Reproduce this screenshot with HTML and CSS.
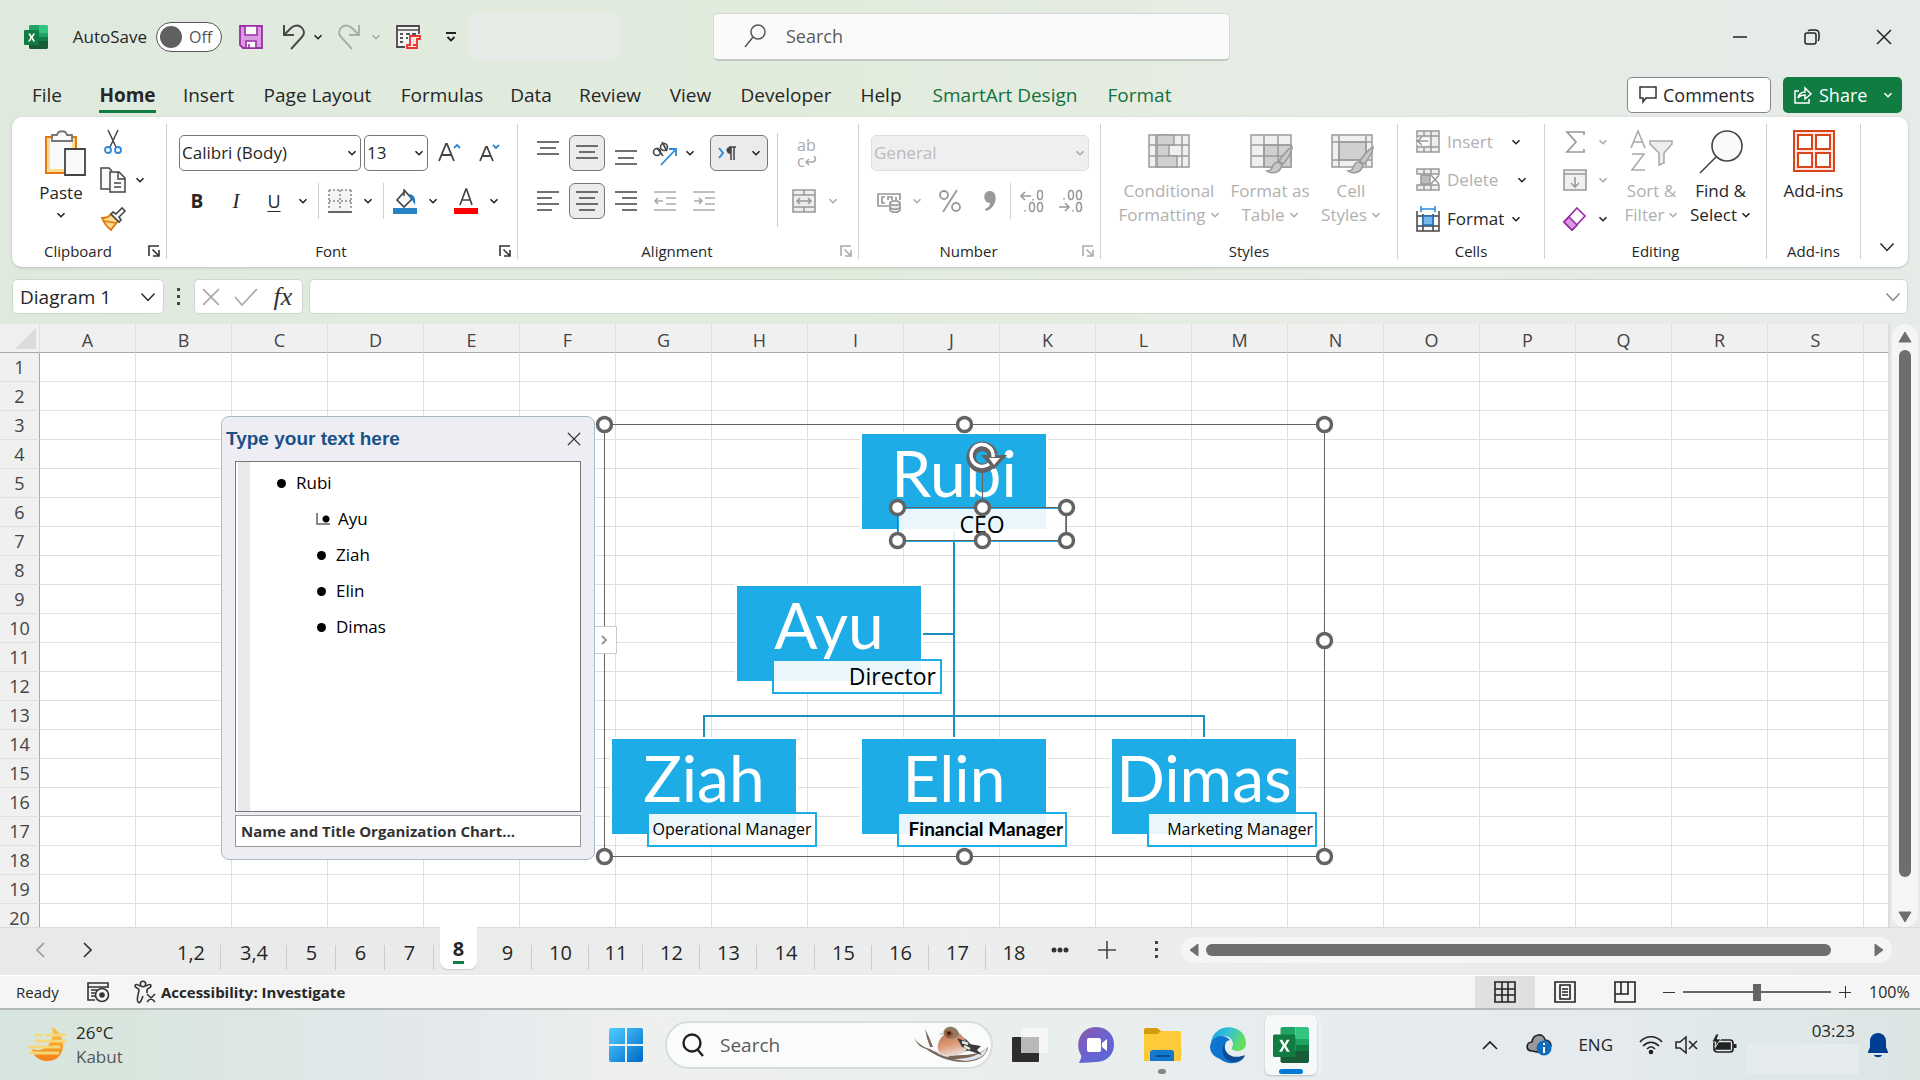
FILE: index.html
```html
<!DOCTYPE html>
<html lang="en">
<head>
<meta charset="utf-8">
<title>Diagram 1 - Excel</title>
<link rel="stylesheet" href="styles.css">
</head>
<body>
<svg class="defs" aria-hidden="true">
  <symbol id="chev" viewBox="0 0 10 10"><path d="M1.5 3.2L5 6.7 8.5 3.2" fill="none" stroke="currentColor" stroke-width="1.6"/></symbol>
  <symbol id="chev-big" viewBox="0 0 16 16"><path d="M1.5 4.5L8 11.500 14.500 4.500" fill="none" stroke="currentColor" stroke-width="1.5"/></symbol>
  <symbol id="launch" viewBox="0 0 12 12"><path d="M1 11V1h10M4.500 4.500L10 10M11 5v6H5" fill="none" stroke="currentColor" stroke-width="1.6"/></symbol>
  <symbol id="cross" viewBox="0 0 16 16"><path d="M1 1l14 14M15 1L1 15" fill="none" stroke="currentColor" stroke-width="1.5"/></symbol>
  <symbol id="excel" viewBox="0 0 24 24">
    <path d="M6 0h9v8H5V1z" fill="#21a366"/><path d="M15 0h8l1 1v7h-9z" fill="#33c481"/><path d="M5 8h10v8H5z" fill="#107c41"/><path d="M15 8h9v8h-9z" fill="#107c41"/><path d="M15 8h9v4h-9z" fill="#21a366"/><path d="M5 16h19v7l-1 1H6l-1-1z" fill="#185c37"/>
    <rect x="0" y="5" width="15" height="15" rx="1" fill="#107c41"/><path d="M4.200 8.500h2l1.500 2.800L9.200 8.500h1.900l-2.400 4 2.500 4H9.200l-1.600-3-1.600 3H4l2.500-4z" fill="#fff"/>
  </symbol>
  <symbol id="brush" viewBox="0 0 30 30"><path d="M28 3c-4 2-10 9-13 14l4 3c4-4 9-12 9-17zM14 18c-4 0-5 3-6 6-1 2-3 3-5 3 4 3 13 3 15-6z" fill="#c8c8c8" stroke="#9a9a9a" stroke-width="1.500"/></symbol>
</svg>

<header class="titlebar">
  <div class="quick">
    <svg width="24" height="24"><use href="#excel"/></svg>
    <label class="autosave" for="autosave">AutoSave</label>
    <button class="toggle" id="autosave" type="button"><i></i>Off</button>
    <button class="tool" type="button" aria-label="Save"><svg width="24" height="24" viewBox="0 0 24 24"><path d="M1 1h22v22H4l-3-3z" fill="#d89be0" stroke="#9a2fa6" stroke-width="1.800"/><path d="M6 1h12v9H6zM7 16h10v7H7z" fill="#fafafa" stroke="#9a2fa6" stroke-width="1.600"/><path d="M10 19v4" stroke="#9a2fa6" stroke-width="1.600"/></svg></button>
    <button class="tool" type="button" aria-label="Undo"><svg width="24" height="26" viewBox="0 0 24 26" fill="none" stroke="#4a4a4a" stroke-width="2"><path d="M2 1v10h10M2 11L9 4c8-7 17 3 11 9L9 25"/></svg></button>
    <svg class="chev"><use href="#chev"/></svg>
    <button class="tool" type="button" aria-label="Redo"><svg width="24" height="26" viewBox="0 0 24 26" fill="none" stroke="#a9b0a9" stroke-width="2"><path d="M22 1v10H12M22 11L15 4C7-3-2 7 4 13l11 12"/></svg></button>
    <svg class="chev off"><use href="#chev"/></svg>
    <button class="tool" type="button" aria-label="Script"><svg width="26" height="26" viewBox="0 0 26 26" fill="none"><path d="M10 23H2V2h22v8" stroke="#4a4a4a" stroke-width="1.800" fill="#f5f5f5"/><path d="M2 6h22" stroke="#4a4a4a" stroke-width="1.500"/><path d="M5 10h3M11 10h4M17 10h4M5 14h3M11 14h2M5 18h3" stroke="#555" stroke-width="1.800"/><path d="M15 12h10v3h-3v9H12v-3h3zM18 21h4" stroke="#e8352e" stroke-width="1.800" fill="#fbe4e2"/></svg></button>
    <button class="tool" type="button" aria-label="Customize"><svg width="12" height="12" viewBox="0 0 12 12" fill="none" stroke="#222" stroke-width="1.800"><path d="M1 2h10M2.500 6L6 9.500 9.500 6"/></svg></button>
    <span class="docname"></span>
  </div>
  <label class="search"><svg width="22" height="24" viewBox="0 0 22 24" fill="none" stroke="#555" stroke-width="1.500"><circle cx="14" cy="8" r="7"/><path d="M9 13L1 23"/></svg><input type="text" placeholder="Search" aria-label="Search"></label>
  <div class="window">
    <button type="button" aria-label="Minimize"><svg width="16" height="16"><path d="M1 8h14" stroke="#222" stroke-width="1.500"/></svg></button>
    <button type="button" aria-label="Restore"><svg width="16" height="16" fill="none" stroke="#222" stroke-width="1.500"><rect x="1" y="4" width="11" height="11" rx="2"/><path d="M4 2c1-1 1-1 3-1h4c3 0 4 1 4 4v4c0 2 0 2-1 3"/></svg></button>
    <button type="button" aria-label="Close"><svg width="16" height="16"><use href="#cross"/></svg></button>
  </div>
</header>

<div class="menubar">
  <nav class="menus">
    <a href="#">File</a><a href="#" class="current">Home</a><a href="#">Insert</a><a href="#">Page Layout</a><a href="#">Formulas</a><a href="#">Data</a><a href="#">Review</a><a href="#">View</a><a href="#">Developer</a><a href="#">Help</a><a href="#" class="ctx">SmartArt Design</a><a href="#" class="ctx">Format</a>
  </nav>
  <button class="comments" type="button"><svg width="18" height="18" viewBox="0 0 18 18" fill="none" stroke="#333" stroke-width="1.500"><path d="M1 1h16v11H7l-3 4v-4H1z"/></svg>Comments</button>
  <button class="share" type="button"><svg width="18" height="18" viewBox="0 0 18 18" fill="none" stroke="#fff" stroke-width="1.500"><path d="M5 5H1v12h14v-4M4 12c1-5 4-6 7-6V2l6 6-6 5V9c-3 0-5 0-7 3z"/></svg>Share<svg class="chev"><use href="#chev"/></svg></button>
</div>

<section class="ribbon">
  <div class="group clipboard">
    <div class="body">
      <button class="big" type="button">
        <svg width="50" height="46" viewBox="-8 0 50 46"><path d="M2 7h30v36H2z" fill="#f9dc91" stroke="#e07a10" stroke-width="2"/><path d="M6 9h22v30H6z" fill="#fafafa"/><path d="M8 11V5h5c1-5 9-5 10 0h5v6z" fill="#fafafa" stroke="#777" stroke-width="1.800"/><path d="M21 19h20v26H21z" fill="#fafafa" stroke="#444" stroke-width="1.800"/></svg>
        <span>Paste</span><svg class="chev"><use href="#chev"/></svg>
      </button>
      <div class="stack">
        <button class="tool" type="button" aria-label="Cut"><svg width="18" height="26" viewBox="0 0 18 26" fill="none"><path d="M4 1l8 17M14 1L6 18" stroke="#444" stroke-width="1.500"/><circle cx="4" cy="21" r="3" stroke="#2b88d8" stroke-width="1.800"/><circle cx="14" cy="21" r="3" stroke="#2b88d8" stroke-width="1.800"/></svg></button><i></i>
        <button class="tool" type="button" aria-label="Copy"><svg width="26" height="26" viewBox="0 0 26 26" fill="#fafafa" stroke="#444" stroke-width="1.500"><path d="M9 22H1V1h8l3 3"/><path d="M10 5h9l6 6v14H10zM18 5v7h7M14 16h7M14 20h7"/></svg></button><svg class="chev"><use href="#chev"/></svg>
        <button class="tool" type="button" aria-label="Format Painter"><svg width="26" height="24" viewBox="0 0 26 24"><path d="M2 11c4 0 7-1 9-4l7 7c-3 4-5 6-7 9-4-3-7-7-9-12z" fill="#fbdb92" stroke="#e07a10" stroke-width="1.800"/><path d="M4 14l12 2" stroke="#e07a10" stroke-width="1.500"/><path d="M11 7l2-2 3 2 6-6 3 3-6 6 2 3-2 2z" fill="#fafafa" stroke="#444" stroke-width="1.600"/></svg></button>
      </div>
    </div>
    <div class="caption"><span>Clipboard</span><svg><use href="#launch"/></svg></div>
  </div>

  <div class="group font">
    <div class="body rows">
      <div class="line fonts">
        <label class="pick"><select aria-label="Font"><option>Calibri (Body)</option></select><svg class="chev"><use href="#chev"/></svg></label>
        <label class="pick"><select aria-label="Font size"><option>13</option></select><svg class="chev"><use href="#chev"/></svg></label>
        <button class="tool" type="button" aria-label="Grow font"><svg width="24" height="24" viewBox="0 0 24 24" fill="none" stroke="#444" stroke-width="1.800"><path d="M1 20L8 3h1l7 17M4 14h9"/><path d="M16 7l3-3 3 3" stroke="#2b88d8"/></svg></button>
        <button class="tool" type="button" aria-label="Shrink font"><svg width="22" height="24" viewBox="0 0 22 24" fill="none" stroke="#444" stroke-width="1.800"><path d="M2 20L8 6h1l6 14M4 15h9"/><path d="M15 4l3 3 3-3" stroke="#2b88d8"/></svg></button>
      </div>
      <div class="line marks">
        <button class="tool b" type="button">B</button><button class="tool it" type="button">I</button><button class="tool u" type="button">U</button><svg class="chev"><use href="#chev"/></svg>
        <i class="bar"></i>
        <button class="tool" type="button" aria-label="Borders"><svg width="24" height="24" viewBox="0 0 24 24" fill="none" stroke="#888" stroke-width="1.500"><path d="M1 1h22v22H1z" fill="#f4f4f4" stroke="none"/><path d="M1 1h22M1 1v20M23 1v20M12 1v20M1 12h22" stroke-dasharray="2 2"/><path d="M0 23h24" stroke-width="2" stroke="#666"/></svg></button><svg class="chev"><use href="#chev"/></svg>
        <i class="bar"></i>
        <button class="tool" type="button" aria-label="Fill colour"><svg width="24" height="26" viewBox="0 0 24 26"><path d="M4 12l8-9 7 8-8 8z" fill="#fafafa" stroke="#444" stroke-width="1.700"/><path d="M11 1v7" stroke="#444" stroke-width="1.500"/><path d="M15 6c6 0 8 4 7 11l-3-5z" fill="#1f7ac0"/><path d="M0 20h24v6H0z" fill="#2583c6"/></svg></button><svg class="chev"><use href="#chev"/></svg>
        <button class="tool" type="button" aria-label="Font colour"><svg width="24" height="26" viewBox="0 0 24 26"><path d="M6 17L12 1h.5L18 17M8 12h8" fill="none" stroke="#444" stroke-width="1.700"/><path d="M0 20h24v6H0z" fill="#f00"/></svg></button><svg class="chev"><use href="#chev"/></svg>
      </div>
    </div>
    <div class="caption"><span>Font</span><svg><use href="#launch"/></svg></div>
  </div>

  <div class="group align">
    <div class="body">
      <div class="rows">
        <div class="line aligns">
          <button class="tool" type="button" aria-label="Top"><svg width="22" height="18" viewBox="0 0 22 18" stroke="#444" stroke-width="1.700"><path d="M0-2h22M3 4h16M0 10h22"/></svg></button>
          <button class="tool on" type="button" aria-label="Middle"><svg width="22" height="18" viewBox="0 0 22 18" stroke="#444" stroke-width="1.700"><path d="M0 2h22M3 8h16M0 14h22"/></svg></button>
          <button class="tool" type="button" aria-label="Bottom"><svg width="22" height="18" viewBox="0 0 22 18" stroke="#444" stroke-width="1.700"><path d="M0 7h22M3 14h16M0 20h22"/></svg></button>
          <button class="tool" type="button" aria-label="Orientation"><svg width="26" height="26" viewBox="0 0 26 26" fill="none"><g stroke="#444" stroke-width="1.600"><circle cx="5" cy="12" r="3.500"/><path d="M5 8l6 8M10 2l5 9"/><circle cx="12" cy="7" r="3.500"/></g><path d="M9 25L24 9M17 9h7v7" stroke="#2b88d8" stroke-width="1.800"/></svg></button>
          <svg class="chev"><use href="#chev"/></svg><i></i>
          <button class="tool on" type="button" aria-label="Text direction"><svg width="20" height="16" viewBox="0 0 20 16" fill="none"><path d="M2 3l4 5-4 5" stroke="#2b88d8" stroke-width="2"/><path d="M19 2h-7M14 2v13M17 2v13" stroke="#444" stroke-width="1.500"/><path d="M14 2c-6-1-6 7 0 7z" fill="#444"/></svg><svg class="chev"><use href="#chev"/></svg></button>
        </div>
        <div class="line aligns">
          <button class="tool" type="button" aria-label="Left"><svg width="22" height="22" viewBox="0 0 22 22" stroke="#444" stroke-width="1.700"><path d="M0 2h22M0 8h15M0 14h22M0 20h15"/></svg></button>
          <button class="tool on" type="button" aria-label="Center"><svg width="22" height="22" viewBox="0 0 22 22" stroke="#444" stroke-width="1.700"><path d="M0 2h22M3 8h16M0 14h22M3 20h16"/></svg></button>
          <button class="tool" type="button" aria-label="Right"><svg width="22" height="22" viewBox="0 0 22 22" stroke="#444" stroke-width="1.700"><path d="M0 2h22M7 8h15M0 14h22M7 20h15"/></svg></button>
          <button class="tool" type="button" aria-label="Decrease indent"><svg width="22" height="22" viewBox="0 0 22 22" fill="none" stroke="#aaa" stroke-width="1.700"><path d="M0 2h22M12 8h10M12 14h10M0 20h22M9 11H1M4 8l-3 3 3 3"/></svg></button>
          <span class="indent"><button class="tool" type="button" aria-label="Increase indent"><svg width="22" height="22" viewBox="0 0 22 22" fill="none" stroke="#aaa" stroke-width="1.700"><path d="M0 2h22M12 8h10M12 14h10M0 20h22M1 11h8M6 8l3 3-3 3"/></svg></button></span>
        </div>
      </div>
      <i class="tall"></i>
      <div class="rows wraps">
        <button class="tool wrap" type="button" aria-label="Wrap text"><span>ab</span><span>c<svg width="12" height="12" viewBox="0 0 12 12" fill="none" stroke="#aaa" stroke-width="1.600"><path d="M9 1c3 3 1 6-2 6H1M4 4L1 7l3 3"/></svg></span></button>
        <div class="line merge"><button class="tool" type="button" aria-label="Merge"><svg width="24" height="24" viewBox="0 0 24 24" fill="#eee" stroke="#999" stroke-width="1.600"><path d="M1 1h22v22H1zM1 6h22M1 18h22M12 1v5M12 18v5M5 12h14M8 9l-3 3 3 3M16 9l3 3-3 3"/></svg></button><svg class="chev off"><use href="#chev"/></svg></div>
      </div>
    </div>
    <div class="caption off"><span>Alignment</span><svg><use href="#launch"/></svg></div>
  </div>

  <div class="group number">
    <div class="body rows">
      <label class="pick"><select aria-label="Number format" disabled><option>General</option></select><svg class="chev off"><use href="#chev"/></svg></label>
      <div class="line numbers">
        <button class="tool" type="button" aria-label="Accounting"><svg width="24" height="24" viewBox="0 0 24 24" fill="none" stroke="#999" stroke-width="1.700"><path d="M12 17H1V5h22v6M5 8v6M8 8H5v6h3M11 11V8h4v3M19 8v3"/><path d="M13 14v7c1 3 9 3 10 0v-7M13 14c1-3 9-3 10 0-1 3-9 3-10 0M13 18c1 3 9 3 10 0" fill="#eee"/></svg></button><svg class="chev off"><use href="#chev"/></svg>
        <button class="tool" type="button" aria-label="Percent"><svg width="22" height="24" viewBox="0 0 22 24" fill="none" stroke="#999" stroke-width="1.800"><circle cx="5" cy="6" r="4"/><circle cx="17" cy="18" r="4"/><path d="M18 1L4 23"/></svg></button>
        <button class="tool" type="button" aria-label="Comma"><svg width="12" height="22" viewBox="0 0 12 22"><path d="M6 1c7 0 7 10 3 15-2 3-4 4-7 5l-1-2c3-1 5-3 5-6-7 0-8-12 0-12z" fill="#999"/></svg></button>
        <i class="bar"></i>
        <button class="tool dec" type="button" aria-label="Increase decimal"><svg width="24" height="24" viewBox="0 0 24 24" fill="none" stroke="#999" stroke-width="1.600"><path d="M11 7H1M5 3L1 7l4 4M13 10v1.500M5 21v1.500"/><ellipse cx="20" cy="6" rx="2.500" ry="4.500"/><ellipse cx="12" cy="18" rx="2.500" ry="4.500"/><ellipse cx="20" cy="18" rx="2.500" ry="4.500"/></svg></button>
        <button class="tool dec" type="button" aria-label="Decrease decimal"><svg width="24" height="24" viewBox="0 0 24 24" fill="none" stroke="#999" stroke-width="1.600"><path d="M0 18h10M6 14l4 4-4 4M14 21v1.500M5 9v1.500"/><ellipse cx="12" cy="6" rx="2.500" ry="4.500"/><ellipse cx="20" cy="6" rx="2.500" ry="4.500"/><ellipse cx="20" cy="18" rx="2.500" ry="4.500"/></svg></button>
      </div>
    </div>
    <div class="caption off"><span>Number</span><svg><use href="#launch"/></svg></div>
  </div>

  <div class="group styles">
    <div class="body">
      <button class="big off" type="button"><svg width="42" height="42" viewBox="0 0 42 42" fill="#f0f0f0" stroke="#9a9a9a" stroke-width="1.500"><path d="M1 5h40v32H1zM8 5v32M34 5v32M1 15h40M1 26h40"/><path d="M9 5h17v10H9zM9 15h12v11H9zM9 26h20v11H9z" fill="#d0d0d0"/></svg><span>Conditional</span><span>Formatting <svg class="chev"><use href="#chev"/></svg></span></button>
      <button class="big off" type="button"><svg width="52" height="42" viewBox="-6 0 52 42" fill="#f0f0f0" stroke="#9a9a9a" stroke-width="1.500"><path d="M1 5h40v32H1z"/><path d="M14 15h27v22H14z" fill="#d0d0d0"/><path d="M14 5v32M28 5v32M1 15h40M1 26h40" fill="none"/><use href="#brush" x="14" y="14" width="30" height="30"/></svg><span>Format as</span><span>Table <svg class="chev"><use href="#chev"/></svg></span></button>
      <button class="big off" type="button"><svg width="52" height="42" viewBox="-6 0 52 42" fill="#f0f0f0" stroke="#9a9a9a" stroke-width="1.500"><path d="M1 5h40v32H1z"/><path d="M8 12h27v18H8z" fill="#d0d0d0"/><path d="M8 5v32M35 5v32M1 12h40M1 30h40" fill="none"/><use href="#brush" x="14" y="14" width="30" height="30"/></svg><span>Cell</span><span>Styles <svg class="chev"><use href="#chev"/></svg></span></button>
    </div>
    <div class="caption"><span>Styles</span></div>
  </div>

  <div class="group cells">
    <div class="body list">
      <button class="item off" type="button"><svg width="24" height="24" viewBox="0 0 24 24" fill="#eee" stroke="#999" stroke-width="1.500"><path d="M1 1h22v21H1zM1 6h22M1 17h22M8 1v5M15 1v21M8 17v5"/><path d="M12 8H1v7h11z" fill="#fff" stroke="none"/><path d="M12 11H1M6 7l-5 4 5 4"/></svg><span>Insert</span><svg class="chev"><use href="#chev"/></svg></button>
      <button class="item off wide" type="button"><svg width="24" height="24" viewBox="0 0 24 24" fill="#eee" stroke="#999" stroke-width="1.500"><path d="M1 1h22v5H1zM1 17h22v5H1zM8 1v5M15 1v5M8 17v5M15 17v5"/><path d="M5 7h9v9H5z" fill="#bbb"/><path d="M15 7l8 9M23 7l-8 9"/></svg><span>Delete</span><svg class="chev"><use href="#chev"/></svg></button>
      <button class="item" type="button"><svg width="24" height="26" viewBox="0 0 24 26" fill="#fafafa" stroke="#444" stroke-width="1.500"><path d="M1 5v20h22V5M1 10h22M1 20h22M7 8v17M17 8v17"/><path d="M7 10h10v9H7z" fill="#7ab8ee" stroke="#1b6fc0"/><path d="M5 3h14M5 0v6M19 0v6" stroke="#2b88d8"/></svg><span>Format</span><svg class="chev"><use href="#chev"/></svg></button>
    </div>
    <div class="caption"><span>Cells</span></div>
  </div>

  <div class="group editing">
    <div class="body">
      <div class="stack">
        <button class="tool" type="button" aria-label="Sum"><svg width="20" height="24" viewBox="0 0 20 24" fill="none" stroke="#999" stroke-width="1.700"><path d="M19 5V2H2l9 10-9 10h17v-3"/></svg></button><svg class="chev off"><use href="#chev"/></svg>
        <button class="tool" type="button" aria-label="Fill"><svg width="24" height="24" viewBox="0 0 24 24" fill="#f0f0f0" stroke="#999" stroke-width="1.600"><path d="M1 2h22v20H1zM1 6h22M12 9v10M8 15l4 4 4-4"/></svg></button><svg class="chev off"><use href="#chev"/></svg>
        <button class="tool" type="button" aria-label="Clear"><svg width="24" height="24" viewBox="0 0 24 24" stroke="#9a2fa6" stroke-width="1.700" fill="#fff"><path d="M14 1l8 8L9 23l-8-8z"/><path d="M6 10l8 8-5 5-8-8z" fill="#d89be0"/></svg></button><svg class="chev"><use href="#chev"/></svg>
      </div>
      <button class="big off" type="button"><svg width="44" height="42" viewBox="0 0 44 42" fill="none" stroke="#aaa" stroke-width="1.600"><path d="M1 18L8 1l7 17M3 12h10M2 24h12L2 40h13"/><path d="M20 11h22v3l-8 9v10l-5 2V23l-9-9z" fill="#eee"/></svg><span>Sort &amp;</span><span>Filter <svg class="chev"><use href="#chev"/></svg></span></button>
      <button class="big" type="button"><svg width="44" height="42" viewBox="0 0 44 42" fill="#fafafa" stroke="#444" stroke-width="1.600"><circle cx="28" cy="16" r="15"/><path d="M17 27L1 43"/></svg><span>Find &amp;</span><span>Select <svg class="chev"><use href="#chev"/></svg></span></button>
    </div>
    <div class="caption"><span>Editing</span></div>
  </div>

  <div class="group addins">
    <div class="body">
      <button class="big" type="button"><svg width="42" height="42" viewBox="0 0 42 42" fill="#fff" stroke="#d9441a" stroke-width="2"><path d="M1 1h40v40H1z" fill="#fde6df"/><path d="M5 5h14v14H5zM23 5h14v14H23zM5 23h14v14H5zM23 23h14v14H23z"/></svg><span>Add-ins</span></button>
    </div>
    <div class="caption"><span>Add-ins</span></div>
  </div>
  <button class="collapse" type="button" aria-label="Collapse ribbon"><svg width="16" height="16"><use href="#chev-big"/></svg></button>
</section>

<section class="formula">
  <label class="name"><input type="text" value="Diagram 1" aria-label="Name box"><svg width="16" height="16"><use href="#chev-big"/></svg></label>
  <svg class="dots" width="4" height="18" fill="#444"><path d="M0 0h3v3H0zM0 7h3v3H0zM0 14h3v3H0z"/></svg>
  <div class="entry">
    <button class="tool" type="button" aria-label="Cancel"><svg width="18" height="18" viewBox="0 0 16 16" color="#aaa"><use href="#cross"/></svg></button>
    <button class="tool" type="button" aria-label="Enter"><svg width="24" height="18" viewBox="0 0 24 18" fill="none" stroke="#aaa" stroke-width="1.700"><path d="M1 9l7 8L23 1"/></svg></button>
    <button class="tool fx" type="button" aria-label="Insert function">fx</button>
  </div>
  <label class="expr"><input type="text" aria-label="Formula bar"><svg width="16" height="16"><use href="#chev-big"/></svg></label>
</section>

<main class="work">
  <div class="sheet">
    <table class="grid"><thead></thead><tbody></tbody></table>

    <div class="diagram">
      <svg class="links" width="724" height="436" fill="none" stroke="#1c8fc0" stroke-width="2"><path d="M350 106v208M319 210h31M100 314v-22h500v22"/></svg>
      <div class="person p1">Rubi</div><div class="role r1">CEO</div>
      <div class="person p2">Ayu</div><div class="role r2">Director</div>
      <div class="person p3">Ziah</div><div class="role r3">Operational Manager</div>
      <div class="person p4">Elin</div><div class="role r4">Financial Manager</div>
      <div class="person p5">Dimas</div><div class="role r5">Marketing Manager</div>
      <svg class="frame" width="740" height="450" viewBox="-10 -10 740 450" fill="none" stroke="#636363">
        <path d="M.5.500h720v432H.5zM293.500 83.500h169v33h-169zM378.500 83V47"/>
        <g fill="#fff" stroke-width="3.500"><circle cx=".5" cy=".5" r="7"/><circle cx="360.500" cy=".5" r="7"/><circle cx="720.500" cy=".5" r="7"/><circle cx="720.500" cy="216.500" r="7"/><circle cx=".5" cy="432.500" r="7"/><circle cx="360.500" cy="432.500" r="7"/><circle cx="720.500" cy="432.500" r="7"/><circle cx="293.500" cy="83.500" r="7"/><circle cx="378.500" cy="83.500" r="7"/><circle cx="462.500" cy="83.500" r="7"/><circle cx="293.500" cy="116.500" r="7"/><circle cx="378.500" cy="116.500" r="7"/><circle cx="462.500" cy="116.500" r="7"/></g>
        <path d="M386 41A11 11 0 1 1 389 31" stroke-width="9.500"/><path d="M379 32h22l-11 12z" fill="#636363" stroke-width="2"/><path d="M385 40A11 11 0 1 1 389 33" stroke="#fff" stroke-width="3.500"/><path d="M385 34h11l-6 7z" fill="#fff" stroke="none"/>
      </svg>
      <button class="slide" type="button" aria-label="Text pane"><svg width="8" height="10" fill="none" stroke="#999" stroke-width="2"><path d="M2 1l4 4-4 4"/></svg></button>
    </div>

    <aside class="pane">
      <div class="panehead"><h2>Type your text here</h2><button class="tool" type="button" aria-label="Close pane"><svg width="14" height="14" viewBox="0 0 16 16"><use href="#cross"/></svg></button></div>
      <ul class="outline">
        <li>Rubi</li><li class="sub assistant">Ayu</li><li class="sub">Ziah</li><li class="sub">Elin</li><li class="sub">Dimas</li>
      </ul>
      <p class="panefoot">Name and Title Organization Chart...</p>
    </aside>
  </div>
  <div class="vscroll">
    <svg width="14" height="12" fill="#6e6e6e"><path d="M7 1l6 10H1z" stroke="#6e6e6e" stroke-linejoin="round"/></svg><i></i><svg width="14" height="12" fill="#6e6e6e"><path d="M1 1h12L7 11z" stroke="#6e6e6e" stroke-linejoin="round"/></svg>
  </div>
</main>

<section class="tabbar">
  <button class="tool" type="button" aria-label="Previous"><svg width="10" height="16" fill="none" stroke="#999" stroke-width="1.700"><path d="M9 1L2 8l7 7"/></svg></button>
  <button class="tool" type="button" aria-label="Next"><svg width="10" height="16" fill="none" stroke="#333" stroke-width="1.700"><path d="M1 1l7 7-7 7"/></svg></button>
  <nav class="tabs">
    <a href="#">1,2</a><a href="#">3,4</a><a href="#">5</a><a href="#">6</a><a href="#">7</a><a href="#" class="active"><b>8</b></a><a href="#">9</a><a href="#">10</a><a href="#">11</a><a href="#">12</a><a href="#">13</a><a href="#">14</a><a href="#">15</a><a href="#">16</a><a href="#">17</a><a href="#">18</a>
  </nav>
  <button class="tool" type="button" aria-label="More sheets"><svg width="18" height="6" fill="#333"><circle cx="3" cy="3" r="2.500"/><circle cx="9" cy="3" r="2.500"/><circle cx="15" cy="3" r="2.500"/></svg></button>
  <button class="tool" type="button" aria-label="New sheet"><svg width="18" height="18" stroke="#444" stroke-width="1.600"><path d="M9 0v18M0 9h18"/></svg></button>
  <svg class="dots" width="4" height="18" fill="#444"><path d="M0 0h3v3H0zM0 7h3v3H0zM0 14h3v3H0z"/></svg>
  <div class="hscroll"><svg width="10" height="14" fill="#6e6e6e"><path d="M9 1v12L1 7z" stroke="#6e6e6e" stroke-linejoin="round"/></svg><i></i><svg width="10" height="14" fill="#6e6e6e"><path d="M1 1v12l8-6z" stroke="#6e6e6e" stroke-linejoin="round"/></svg></div>
</section>

<footer class="status">
  <span class="ready">Ready</span>
  <svg width="24" height="22" viewBox="0 0 24 22" fill="none" stroke="#333" stroke-width="1.600"><path d="M8 19H1V2h20v5M1 6h20M4 9h6M4 12h4M4 15h4"/><circle cx="15" cy="14" r="6.500"/><circle cx="15" cy="14" r="2" fill="#333"/></svg>
  <svg class="acc" width="24" height="24" viewBox="0 0 24 24" fill="none" stroke="#333" stroke-width="1.600"><circle cx="10" cy="4" r="2.700"/><path d="M7 6C4 4 2 4 2 6s4 2 4 4-3 10-1 12 3-1 5-6M13 6c3-2 5-2 5 0s-4 2-4 4v3M14 14l8 8M22 14l-8 8"/></svg>
  <a href="#" class="access">Accessibility: Investigate</a>
  <button class="view sel" type="button" aria-label="Normal"><svg width="22" height="22" viewBox="0 0 22 22" fill="none" stroke="#222" stroke-width="1.600"><path d="M1 1h20v20H1zM1 8h20M1 14h20M8 1v20M14 1v20"/></svg></button>
  <button class="view" type="button" aria-label="Page layout"><svg width="22" height="22" viewBox="0 0 22 22" fill="none" stroke="#222" stroke-width="1.600"><path d="M1 1h20v20H1zM6 4h10v14H6zM8 8h6M8 11h6M8 14h6"/></svg></button>
  <button class="view" type="button" aria-label="Page break"><svg width="22" height="22" viewBox="0 0 22 22" fill="none" stroke="#222" stroke-width="1.600"><path d="M1 1h20v20H1zM1 13h13V1M7 1v12"/></svg></button>
  <svg class="zoomkey" width="12" height="12" stroke="#333"><path d="M0 6.500h12"/></svg>
  <input class="zoom" type="range" min="0" max="100" value="50" aria-label="Zoom">
  <svg class="zoomkey" width="12" height="12" stroke="#333"><path d="M0 6.500h12M6.500 0v12"/></svg>
  <span class="percent">100%</span>
</footer>

<footer class="taskbar">
  <div class="weather">
    <svg width="38" height="36" viewBox="0 0 38 36"><defs><linearGradient id="sun" x1="0" y1="0" x2="0" y2="1"><stop offset="0" stop-color="#f8c740"/><stop offset="1" stop-color="#f47f18"/></linearGradient><linearGradient id="win" x1="0" y1="0" x2="1" y2="1"><stop offset="0" stop-color="#4fd0ff"/><stop offset="1" stop-color="#0067c8"/></linearGradient><linearGradient id="edge" x1="0" y1="0" x2="1" y2=".4"><stop offset="0" stop-color="#1b9de2"/><stop offset=".5" stop-color="#35c1d8"/><stop offset="1" stop-color="#66e05a"/></linearGradient><linearGradient id="chat" x1="0" y1="0" x2="1" y2="1"><stop offset="0" stop-color="#8c5aa8"/><stop offset=".5" stop-color="#6a63d0"/><stop offset="1" stop-color="#5566d8"/></linearGradient><linearGradient id="breast" x1="0" y1="0" x2=".3" y2="1"><stop offset="0" stop-color="#b4744f"/><stop offset=".6" stop-color="#dd9a76"/><stop offset="1" stop-color="#e9d6cc"/></linearGradient></defs><path d="M23 0c16 9 15 34-5 34C9 34 4 28 3 22c12 5 24-7 20-22z" fill="url(#sun)"/><path d="M7 8h5M18 8h18M7 14h29M1 20h20M24 20h6M1 26h28" stroke="#f6d779" stroke-width="3" stroke-linecap="round"/></svg>
    <div><span>26°C</span><span class="dim">Kabut</span></div>
  </div>
  <div class="apps">
    <button class="app" type="button" aria-label="Start"><svg width="36" height="36" viewBox="0 0 36 36" fill="url(#win)"><path d="M1 3q0-2 2-2h14v16H1zM19 1h14q2 0 2 2v14H19zM1 19h16v16H3q-2 0-2-2zM19 19h16v14q0 2-2 2H19z"/></svg></button>
    <label class="find"><svg width="22" height="24" viewBox="0 0 22 24" fill="none" stroke="#222" stroke-width="2.400"><circle cx="10" cy="10" r="8.500"/><path d="M15 16l6 7"/></svg><input type="text" placeholder="Search" aria-label="Search Windows">
      <svg width="76" height="38" viewBox="0 0 76 38">
        <path d="M1 11c3 6 9 10 16 12 8 5 20 7 32 6 10 0 20-2 26-8-1 10-12 15-24 15-15 0-28-6-38-13C6 21 3 16 1 11z" fill="#7b6757"/>
        <path d="M17 21L14 12 12 3l4 8 4 10z" fill="#7b6757"/>
        <path d="M40 33c12 0 24-2 34-11-1 9-11 12-22 13zM20 23c6 4 12 6 18 6l-3 2c-6-1-12-4-15-8z" fill="#dfe6f1"/>
        <path d="M46 9l8 5 8 9-12 3z" fill="#4b5265"/><path d="M56 18l12 2-4 4 5 5-15-5z" fill="#3b3a3c"/>
        <path d="M31 9c-8 6-9 18 0 20 9 2 20 0 23-6 1-6-4-14-10-17z" fill="url(#breast)"/>
        <path d="M30 8c1-10 14-9 16 0-3 5-9 6-13 3z" fill="#8b7a62"/><path d="M32 6c4-3 8-1 8 3l-6 3z" fill="#9c4a24"/>
        <path d="M44 12l8 3 6 9-9-3z" fill="#343943"/><path d="M49 16l6 2M51 20l6 3" stroke="#eee8d8" stroke-width="2.500"/>
        <circle cx="36" cy="7" r="1.500" fill="#111"/><path d="M31 6l-5 2 5 2z" fill="#c9ccd2"/>
      </svg></label>
    <button class="app" type="button" aria-label="Task view"><svg width="38" height="36" viewBox="0 0 38 36"><rect x="1" y="10" width="27" height="25" rx="1" fill="#2c2c2c"/><rect x="10" y="1" width="27" height="25" rx="1" fill="#f6f6f6"/><path d="M10 10h18v16H10z" fill="#b9b9b9"/></svg></button>
    <button class="app" type="button" aria-label="Chat"><svg width="36" height="36" viewBox="0 0 36 36"><path d="M18 0c24 0 24 35 0 35-4 0-10 1-17 1 1-3 3-5 2-8C-4 16 3 0 18 0z" fill="url(#chat)"/><rect x="9" y="11" width="14" height="14" rx="2" fill="#fff"/><path d="M24 16l5-4v12l-5-4z" fill="#fff"/></svg></button>
    <button class="app open" type="button" aria-label="Files"><svg width="38" height="36" viewBox="0 0 38 36"><path d="M1 3q0-2 2-2h11l4 3v6H1z" fill="#d79a0a"/><path d="M1 7h13l4-3h18q2 0 2 2v28H1z" fill="#ffca3a"/><path d="M7 34v-8q0-3 3-3h18q3 0 3 3v8z" fill="#1478cf"/><path d="M13 29h14" stroke="#0a3f80" stroke-width="1.500"/></svg></button>
    <button class="app" type="button" aria-label="Edge"><svg width="36" height="36" viewBox="0 0 36 36"><path d="M1 17C2-5 35-5 36 16c0 8-8 9-13 7-3-2 0-3 0-6 0-9-15-12-22 0z" fill="url(#edge)"/><path d="M0 20C1 8 14 6 20 13c-5 1-6 5-5 10 2 9 12 11 20 6-5 9-18 9-25 3C4 30 0 25 0 20z" fill="#0f74d0"/><path d="M16 15c-6 5-4 20 8 20 5 0 9-3 11-7-7 3-17 3-20-6-1-3 0-5 1-7z" fill="#0f4a96"/></svg></button>
    <button class="app tile" type="button" aria-label="Excel"><svg width="36" height="36"><use href="#excel"/></svg></button>
  </div>
  <div class="tray">
    <svg width="16" height="10" viewBox="0 0 16 10" fill="none" stroke="#222" stroke-width="1.700"><path d="M1 9l7-7 7 7"/></svg>
    <svg width="26" height="22" viewBox="0 0 26 22"><path d="M6 17C-1 17 0 8 6 8c1-9 12-9 13-2 4 0 6 3 6 6l-13 6z" fill="#9a9a9a" stroke="#222" stroke-width="1.700"/><circle cx="18" cy="14" r="7.500" fill="#0f6cbd"/><path d="M18 9v2M18 13v6" stroke="#fff" stroke-width="2"/></svg>
    <span>ENG</span>
    <svg width="24" height="20" viewBox="0 0 24 20" fill="none" stroke="#222" stroke-width="1.700"><path d="M1 7c6-7 16-7 22 0M4 11c5-5 11-5 16 0M8 14c3-3 5-3 8 0"/><circle cx="12" cy="17" r="1.500" fill="#222"/></svg>
    <svg width="24" height="20" viewBox="0 0 24 20" fill="none" stroke="#222" stroke-width="1.500"><path d="M1 7h4l6-5v16l-6-5H1zM14 6l8 8M22 6l-8 8"/></svg>
    <svg width="26" height="22" viewBox="0 0 26 22" fill="none" stroke="#222" stroke-width="1.700"><rect x="3" y="6" width="19" height="12" rx="3"/><path d="M8 9h11v6H5z" fill="#222"/><path d="M24 10v4" stroke-width="3"/><path d="M5 0L1 8h4l-1 5 6-8H6l2-5z" fill="#222" stroke="#e6ebed" stroke-width=".8"/></svg>
    <time>03:23</time>
    <svg width="20" height="26" viewBox="0 0 20 26" fill="#003e92"><path d="M10 1c5 0 8 4 8 8v6l2 5v1H0v-1l2-5V9c0-4 3-8 8-8zM6 23h8c-1 3-7 3-8 0z"/></svg>
  </div>
</footer>
<script src="script.js"></script>
</body>
</html>
```
FILE: styles.css
```css
* { box-sizing: border-box; }
body {
  margin: 0; height: 100vh; min-height: 700px; overflow: hidden;
  display: flex; flex-direction: column;
  font: 17px/24px "Open Sans", "Noto Sans", sans-serif; color: #262626;
  background: linear-gradient(90deg, #dfe9de, #e2ecdd 45%, #e7ece6 70%, #e7ebe8);
}
button, input, select { font: inherit; color: inherit; margin: 0; padding: 0; border: 0; background: none; outline: 0; }
a { color: inherit; text-decoration: none; }
svg { display: block; flex: none; overflow: visible; }
.defs { position: absolute; width: 0; height: 0; }
.chev { width: 10px; height: 10px; color: #222; }
.chev.off { color: #aaa; }
.tool { display: flex; align-items: center; justify-content: center; }

/* title bar */
.titlebar { display: grid; grid-template-columns: minmax(620px, 1fr) 517px 690px; align-items: center; height: 73px; flex: none; }
.quick { display: grid; grid-template-columns: 24px 108px 66px 58px 28px 20px 42px 12px 52px 34px 152px; align-items: center; justify-items: center; padding-left: 24px; }
.autosave { justify-self: end; padding-right: 9px; }
.docname { width: 150px; height: 49px; border-radius: 8px; background: #e6ebe5; }
.toggle { display: flex; align-items: center; gap: 7px; width: 66px; height: 30px; padding-left: 3px; border: 1px solid #555; border-radius: 15px; background: #fff; font-size: 16px; color: #555; }
.toggle i { width: 22px; height: 22px; border-radius: 50%; background: #606060; }
.search { display: flex; align-items: center; gap: 20px; height: 48px; padding-left: 30px; border: 1px solid #d5d9d5; border-bottom: 2px solid #c5c9c5; border-radius: 5px; background: #fafafa; }
.search input { width: 300px; font-size: 18px; }
::placeholder { color: #5a5a5a; opacity: 1; }
.window { display: flex; justify-content: flex-end; }
.window button { display: grid; place-items: center; width: 72px; height: 48px; }

/* menu tabs */
.menubar { display: flex; align-items: center; height: 44px; flex: none; padding: 0 18px 0 16px; }
.menus { display: grid; grid-template-columns: 62px 99px 63px 155px 94px 84px 74px 87px 104px 86px 162px 107px; justify-items: center; margin-right: auto; font-size: 19px; }
.menus a { padding: 5px 0 3px; border-bottom: 3px solid transparent; white-space: nowrap; }
.menus .current { font-weight: 700; border-color: #107c41; }
.menus .ctx { color: #13713c; }
.comments, .share { display: flex; align-items: center; height: 36px; border-radius: 5px; font-size: 18px; }
.comments { gap: 6px; width: 144px; padding-left: 11px; margin-right: 12px; border: 1px solid #888; background: #fff; }
.share { gap: 7px; width: 119px; padding-left: 11px; background: #107c41; color: #fff; }
.share .chev { margin-left: 9px; color: #fff; }

/* ribbon */
.ribbon { display: flex; flex: none; height: 150px; margin: 0 12px; padding: 7px 0 8px; border-radius: 10px; background: #fff; box-shadow: 0 1px 3px #b8c4b8; }
.group { display: flex; flex-direction: column; border-right: 1px solid #d0d0d0; }
.body { display: flex; height: 119px; }
.rows { display: flex; flex-direction: column; gap: 12px; padding-top: 11px; }
.line { display: grid; height: 36px; align-items: center; justify-items: center; }
.bar { width: 1px; height: 36px; background: #d0d0d0; }
.caption { display: flex; align-items: center; height: 16px; padding: 0 6px; font-size: 15px; line-height: 16px; }
.caption span { flex: 1; text-align: center; }
.caption svg { width: 12px; height: 12px; margin-left: 10px; color: #333; }
.caption.off svg { color: #aaa; }
.clipboard { width: 155px; }
.font { width: 351px; }
.align { width: 341px; }
.number { width: 242px; }
.styles { width: 297px; }
.cells { width: 147px; }
.editing { width: 222px; }
.addins { width: 94px; }
.big { display: flex; flex-direction: column; align-items: center; padding-top: 6px; white-space: nowrap; }
.big > svg:first-child { margin-bottom: 7px; }
.big span { display: flex; align-items: center; gap: 4px; height: 24px; }
.big.off, .item.off { color: #b0b0b0; }
.big.off .chev { color: #aaa; }
.stack { display: grid; grid-template-rows: 36px 39px 39px; align-items: center; justify-items: center; }
.clipboard .big { width: 74px; margin-left: 12px; }
.clipboard .big > svg:first-child { margin-bottom: 5px; }
.clipboard .big .chev { margin-top: 5px; }
.clipboard .stack { grid-template-columns: 30px 24px; }
.font .body { padding-left: 12px; }
.fonts { grid-template-columns: 182px 64px 38px 34px; column-gap: 3px; }
.marks { grid-template-columns: 36px 42px 34px 24px 7px 36px 20px 11px 32px 24px 42px 14px; }
.pick { position: relative; width: 100%; height: 36px; }
.pick select { appearance: none; width: 100%; height: 36px; padding-left: 2px; border: 1px solid #777; border-radius: 5px; background: #fff; }
.pick select:disabled { border-color: #ddd; background: #efefef; color: #bbb; opacity: 1; }
.pick .chev { position: absolute; right: 4px; top: 13px; }
.b { font-weight: 700; font-size: 19px; }
.it { font: italic 21px "Liberation Serif", serif; }
.u { font-size: 18px; text-decoration: underline; text-underline-offset: 3px; }
.align .body { padding-left: 12px; }
.aligns { grid-template-columns: 36px 42px 36px 42px 8px 16px 58px; }
.aligns .on { width: 36px; height: 36px; gap: 14px; border: 1px solid #777; border-radius: 6px; background: #ebebeb; }
.aligns .on:last-child { width: 58px; }
.indent { justify-self: start; width: 36px; display: grid; place-items: center; }
.tall { width: 1px; height: 94px; margin: 9px 9px 0; background: #d0d0d0; }
.wrap { flex-direction: column; align-items: flex-start; width: 36px; height: 36px; padding-left: 10px; font-size: 16px; line-height: 16px; color: #aaa; }
.wrap span { display: flex; align-items: center; height: 16px; }
.merge { grid-template-columns: 34px 24px; }
.number .body { padding-left: 12px; }
.number .pick { width: 218px; }
.numbers { grid-template-columns: 36px 20px 46px 34px 7px 36px 42px; }
.styles .body { display: grid; grid-template-columns: 112px 90px 72px; padding-left: 12px; }
.list { flex-direction: column; padding-left: 18px; }
.item { display: grid; grid-template-columns: 24px 57px 10px; column-gap: 7px; align-items: center; height: 39px; text-align: left; }
.item:first-child { height: 36px; }
.item .chev { color: #222; }
.item.wide { grid-template-columns: 24px 63px 10px; }
.editing .stack { grid-template-columns: 36px 20px; padding-left: 12px; }
.editing .big { width: 69px; }
.editing .stack + .big { margin-left: 4px; }
.addins .big { width: 93px; }
.collapse { display: grid; flex: 1; align-content: end; justify-content: center; padding: 0 0 4px 4px; }

/* formula bar */
.formula { display: flex; align-items: center; flex: none; height: 57px; padding: 2px 12px 0; }
.name, .entry, .expr { display: flex; align-items: center; height: 35px; border: 1px solid #d0d6d0; border-radius: 5px; background: #fff; }
.name { width: 152px; padding: 0 7px; }
.name input { width: 100%; font-size: 19px; }
.formula .dots { margin: 0 13px; }
.entry { width: 109px; padding: 0 7px; justify-content: space-between; color: #333; }
.fx { width: 24px; font: italic 26px/30px "Liberation Serif", serif; color: #333; }
.expr { flex: 1; margin-left: 6px; padding-right: 6px; color: #888; }
.expr input { flex: 1; }

/* worksheet */
.work { display: flex; flex: 1; min-height: 0; background: #e8ebea; }
.sheet { position: relative; flex: 1; min-width: 0; overflow: hidden; background: #fff; border-right: 1px solid #d5d5d5; }
.grid { width: 100%; table-layout: fixed; border-spacing: 0; font-size: 18px; line-height: 20px; color: #444; }
.grid th, .grid td { height: 29px; padding: 0; font-weight: 400; border-right: 1px solid #e0e0e0; border-bottom: 1px solid #e0e0e0; }
.grid th { background: #f0f0f0; }
.grid thead th { width: 96px; padding-top: 4px; border-bottom-color: #a8a8a8; }
.grid thead th:first-child { width: 40px; }
.grid thead th:last-child { width: auto; }
.grid tbody th { border-right-color: #a8a8a8; }
.grid .corner { background: linear-gradient(135deg, transparent 50%, #dcdcdc 50%) 15px 4px / 21px 21px no-repeat #f0f0f0; }
.vscroll { display: flex; flex-direction: column; align-items: center; width: 26px; margin: 0 2px 0 2px; padding: 7px 0 4px; border-radius: 13px; background: #f5f5f5; }
.vscroll i { flex: 1; width: 12px; margin: 7px 0 34px; border-radius: 6px; background: #6e6e6e; }

/* org chart drawn on the sheet */
.diagram { position: absolute; left: 604px; top: 100px; width: 721px; height: 433px; }
.links, .frame { position: absolute; left: 0; top: 0; }
.frame { left: -10px; top: -10px; }
.person, .role { position: absolute; display: flex; justify-content: center; white-space: nowrap; }
.person { width: 184px; height: 95px; background: #1eace6; outline: 2px solid #fff; color: #fff; font: 64px/78px Lato, sans-serif; }
.role { align-items: center; width: 170px; height: 35px; padding-bottom: 2px; border: 2px solid #1eace6; background: rgba(255, 255, 255, .9); color: #000; font-size: 16px; }
.p1 { left: 258px; top: 10px; } .r1 { left: 293px; top: 83px; font-size: 23px; }
.p2 { left: 133px; top: 162px; } .r2 { left: 168px; top: 235px; font-size: 23px; justify-content: flex-end; padding-right: 4px; }
.p3 { left: 8px; top: 315px; } .r3 { left: 43px; top: 388px; }
.p4 { left: 258px; top: 315px; } .r4 { left: 293px; top: 388px; font: bold 19px/24px Lato, sans-serif; justify-content: flex-end; padding-right: 2px; }
.p5 { left: 508px; top: 315px; } .r5 { left: 543px; top: 388px; justify-content: flex-end; padding-right: 2px; }
.slide { position: absolute; left: -11px; top: 202px; width: 24px; height: 28px; display: grid; place-items: center; padding-right: 3px; border: 1px solid #ccc; background: #fff; }

/* text pane floating over the sheet */
.pane { position: absolute; left: 221px; top: 92px; width: 374px; height: 444px; display: flex; flex-direction: column; padding: 0 13px 12px; border: 1px solid #a9b9c2; border-radius: 8px; background: #efedf4; }
.panehead { display: flex; align-items: center; justify-content: space-between; height: 44px; margin-left: -9px; }
.panehead h2 { margin: 0; font: bold 19px/24px "Liberation Sans", sans-serif; color: #1a5288; }
.outline { flex: 1; margin: 0; padding: 3px 0 0 46px; list-style: none; border: 1px solid #777; background: linear-gradient(90deg, #fff 2px, #e9e9e9 2px 14px, #fff 14px); color: #000; line-height: 36px; }
.outline li { display: flex; align-items: center; gap: 10px; margin-left: -6px; }
.outline li::before { content: ""; width: 9px; height: 9px; margin-left: 1px; border-radius: 50%; background: #000; }
.outline .sub { margin-left: 34px; }
.outline .assistant::before { width: 12px; height: 10px; margin: 0 -2px 0 0; border: solid #888; border-width: 0 0 2px 2px; border-radius: 0; background: radial-gradient(circle at 8px 6px, #000 3px, transparent 4px); }
.panefoot { margin: 3px 0 0; height: 32px; padding-left: 5px; border: 1px solid #999; background: #fff; font-size: 15px; font-weight: 700; line-height: 31px; color: #333; }

/* sheet tabs */
.tabbar { display: flex; align-items: center; flex: none; height: 48px; padding: 0 28px 3px 16px; border-top: 1px solid #d8dcd9; background: linear-gradient(90deg, #e7eae8, #eceeed 50%, #e8ebea); }
.tabbar .tool { width: 48px; height: 40px; }
.tabbar > .tool:nth-child(2) { margin-right: 49px; }
.tabs { display: grid; grid-template-columns: 60px 66px 49px 49px 49px 49px 49px 57px 54px 57px 57px 58px 57px 57px 57px 56px; align-self: start; font-size: 20px; }
.tabs a { height: 42px; padding-top: 13px; text-align: center; background: linear-gradient(#ccc, #ccc) right 17px / 1px 28px no-repeat; line-height: 24px; }
.tabs a:last-child { background: none; }
.tabs .active { margin: -1px 6px 0 6px; padding-top: 9px; border-radius: 0 0 8px 8px; background: #fff; box-shadow: 0 1px 1px #ccc; }
.tabs b { display: inline-block; border-bottom: 3px solid #107c41; line-height: 25px; }
.tabbar > .tool:nth-child(4) { width: 36px; }
.tabbar > .tool:nth-child(5) { width: 58px; }
.tabbar .dots { margin: 0 22px 0 19px; }
.hscroll { display: flex; flex: 1; align-items: center; gap: 7px; height: 26px; padding: 0 8px; border-radius: 13px; background: #f5f5f5; }
.hscroll i { flex: 1; height: 12px; margin-right: 36px; border-radius: 6px; background: #6e6e6e; }

/* status bar */
.status { display: flex; align-items: center; flex: none; height: 35px; padding: 0 9px 0 16px; border-top: 1px solid #fff; border-bottom: 2px solid #b4bab7; background: #f5f5f5; font-size: 15px; }
.ready { width: 71px; }
.acc { margin: 0 4px 0 22px; }
.access { margin-right: auto; font-weight: 700; }
.view { display: grid; place-items: center; width: 60px; height: 32px; }
.view.sel { background: #e0e0e0; }
.zoomkey { margin: 0 8px; }
.zoom { appearance: none; width: 148px; height: 18px; background: linear-gradient(#666, #666) center / 100% 2px no-repeat; }
.zoom::-webkit-slider-thumb { appearance: none; width: 8px; height: 17px; background: #636363; }
.percent { width: 42px; margin-left: 10px; font-size: 16px; }

/* taskbar */
.taskbar { display: grid; grid-template-columns: 1fr auto 1fr; align-items: center; flex: none; height: 70px; padding-right: 10px; background: linear-gradient(90deg, #d6e5de, #d9e6de 7%, #e3e8ed 22%, #eef0ed 34%, #e8eeee 60%, #e4eaed 85%, #dce5e4); }
.weather { display: flex; align-items: center; gap: 9px; padding-left: 29px; }
.weather span { display: block; }
.dim { color: #555; }
.apps { display: flex; align-items: center; }
.app { position: relative; display: grid; place-items: center; width: 66px; height: 60px; }
.app.open::after, .tile::after { content: ""; position: absolute; bottom: 1px; width: 8px; height: 5px; border-radius: 3px; background: #888; }
.tile { width: 52px; margin-left: 4px; border-radius: 6px; background: #f6f8f9; box-shadow: 0 1px 2px #bbb, 4px 0 0 #edf1f1; }
.tile::after { width: 24px; background: #0078d4; }
.find { display: flex; align-items: center; width: 328px; height: 48px; margin: 0 4px 0 6px; padding: 0 2px 0 15px; border: 2px solid #d9dedd; border-radius: 24px; background: #fafcfb; }
.find input { flex: 1; min-width: 0; margin-left: 16px; font-size: 19px; }
.tray { display: flex; align-items: center; justify-content: flex-end; padding-right: 22px; }
.tray > :nth-child(1) { margin-right: 28px; }
.tray > :nth-child(2) { margin-right: 26px; }
.tray > :nth-child(3) { margin-right: 26px; }
.tray > :nth-child(4), .tray > :nth-child(5) { margin-right: 12px; }
.tray time { width: 112px; height: 58px; margin: 0 9px 0 10px; padding: 3px 4px 0 0; text-align: right; background: linear-gradient(#e6ecee, #e6ecee) 0 100% / 100% 30px no-repeat; }
```
FILE: script.js
```js
// Fills the worksheet with column letters, row numbers and empty cells.
const grid = document.querySelector('.grid');
const letters = 'ABCDEFGHIJKLMNOPQRS'.split('');
grid.tHead.innerHTML = '<tr><th class="corner"></th>' +
  letters.map(l => '<th>' + l + '</th>').join('') + '<th></th></tr>';
let rows = '';
for (let n = 1; n <= 20; n++) {
  rows += '<tr><th>' + n + '</th>' + '<td></td>'.repeat(letters.length + 1) + '</tr>';
}
grid.tBodies[0].innerHTML = rows;
```
